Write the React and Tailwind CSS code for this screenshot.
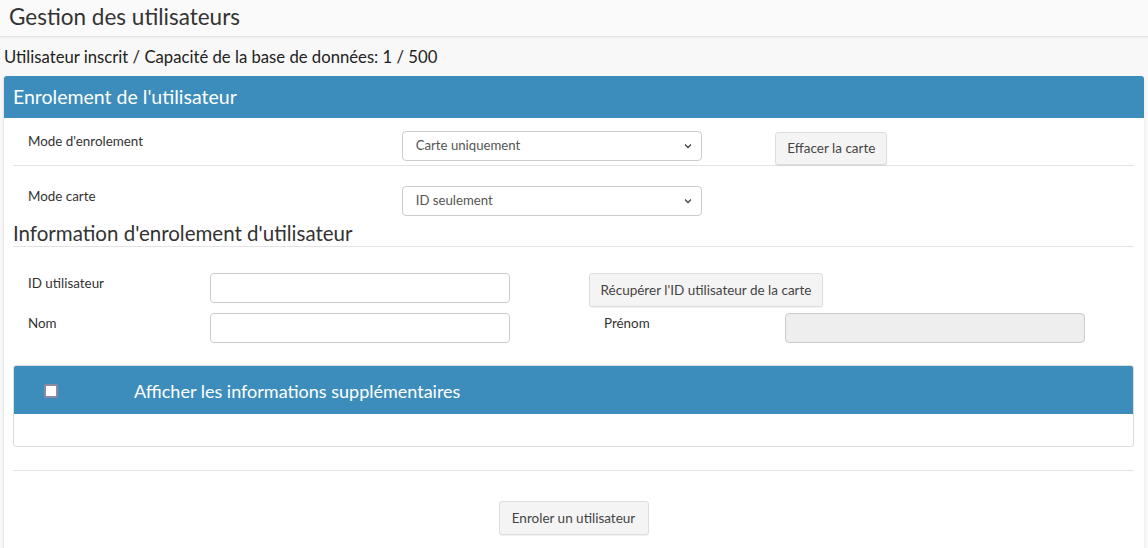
import React from "react";

const font = { fontFamily: "Lato, 'Noto Sans', sans-serif" };

function Chevron() {
  return (
    <svg width="10" height="10" viewBox="0 0 10 10" className="absolute right-[8px] top-1/2 -translate-y-1/2">
      <path d="M2 3.5 L5 6.5 L8 3.5" fill="none" stroke="#444" strokeWidth="1.3" />
    </svg>
  );
}

function Select({ value }) {
  return (
    <div className="relative w-[300px] h-[30px] border border-[#ccc] rounded-[4px] bg-white flex items-center pl-[13px] text-[13.2px] text-[#555]">
      {value}
      <Chevron />
    </div>
  );
}

function Btn({ children, className = "" }) {
  return (
    <button className={"whitespace-nowrap flex items-center justify-center bg-[#f4f4f4] border border-[#ddd] rounded-[3px] text-[13.5px] text-[#444] shadow-[0_1px_1px_rgba(0,0,0,0.06)] " + className}>
      {children}
    </button>
  );
}

export default function App() {
  return (
    <div className="min-h-screen bg-[#f8f8f8] text-[#333]" style={font}>
      <div className="h-[37px] bg-[#fafafa] border-b border-[#e3e3e3] shadow-[0_1px_2px_rgba(0,0,0,0.05)] pl-[9px] flex items-center text-[22.5px] text-[#333] pb-[3px]">
        Gestion des utilisateurs
      </div>
      <div className="pl-[4px] pt-[8px] h-[39px] text-[16.7px] leading-[24px] text-[#222]">
        Utilisateur inscrit / Capacité de la base de données: 1 / 500
      </div>
      <div className="ml-[3px] mr-[4px] bg-white rounded-t-[3px] border-l border-[#e8e8e8] shadow-[0_1px_2px_rgba(0,0,0,0.1)] min-h-[472px]">
        <div className="h-[42px] bg-[#3c8dbc] rounded-t-[3px] flex items-center pl-[9px] text-[19.5px] text-white">
          Enrolement de l'utilisateur
        </div>
        <div className="pl-[9px] pr-[10px]">
          <div className="flex h-[48px] pt-[13px] border-b border-[#e3e3e3]">
            <div className="w-[373.7px] pl-[15px] text-[13.4px] leading-[20px]">Mode d'enrolement</div>
            <div className="w-[373.7px] pl-[15px]"><Select value="Carte uniquement" /></div>
            <div className="pl-[15px] pt-[1px]"><Btn className="w-[112px] h-[33px]">Effacer la carte</Btn></div>
          </div>
          <div className="flex pt-[20px] h-[50px]">
            <div className="w-[373.7px] pl-[15px] text-[13.4px] leading-[20px]">Mode carte</div>
            <div className="w-[373.7px] pl-[15px]"><Select value="ID seulement" /></div>
          </div>
          <div className="h-[31px] flex items-end pb-[1px] border-b border-[#e3e3e3] text-[20.5px] leading-[24px] text-[#333]">
            Information d'enrolement d'utilisateur
          </div>
          <div className="flex pt-[26px] h-[66px]">
            <div className="w-[197px] pl-[15px] text-[13.4px] leading-[20px]">ID utilisateur</div>
            <div className="w-[379px]"><div className="w-[300px] h-[30px] border border-[#ccc] rounded-[4px] bg-white" /></div>
            <div><Btn className="w-[234px] h-[34px]">Récupérer l'ID utilisateur de la carte</Btn></div>
          </div>
          <div className="flex h-[52px]">
            <div className="w-[197px] pl-[15px] text-[13.4px] leading-[20px]">Nom</div>
            <div className="w-[379px]"><div className="w-[300px] h-[30px] border border-[#ccc] rounded-[4px] bg-white" /></div>
            <div className="w-[196px] pl-[15px] text-[13.4px] leading-[20px]">Prénom</div>
            <div><div className="w-[300px] h-[30px] border border-[#ccc] rounded-[4px] bg-[#eeeeee]" /></div>
          </div>
          <div className="border border-[#ddd] rounded-[3px] h-[82px] bg-white overflow-hidden">
            <div className="h-[48px] bg-[#3c8dbc] flex items-center pt-[2px]">
              <div className="w-[120px] pl-[30px] flex items-center">
                <div className="w-[14px] h-[14px] bg-white border-[2px] border-[#8a8aa3] rounded-[2px]" />
              </div>
              <div className="text-[18px] text-white">Afficher les informations supplémentaires</div>
            </div>
          </div>
          <div className="mt-[23px] border-t border-[#e3e3e3] pt-[30px] flex justify-center">
            <Btn className="w-[150px] h-[34px]">Enroler un utilisateur</Btn>
          </div>
        </div>
      </div>
    </div>
  );
}
